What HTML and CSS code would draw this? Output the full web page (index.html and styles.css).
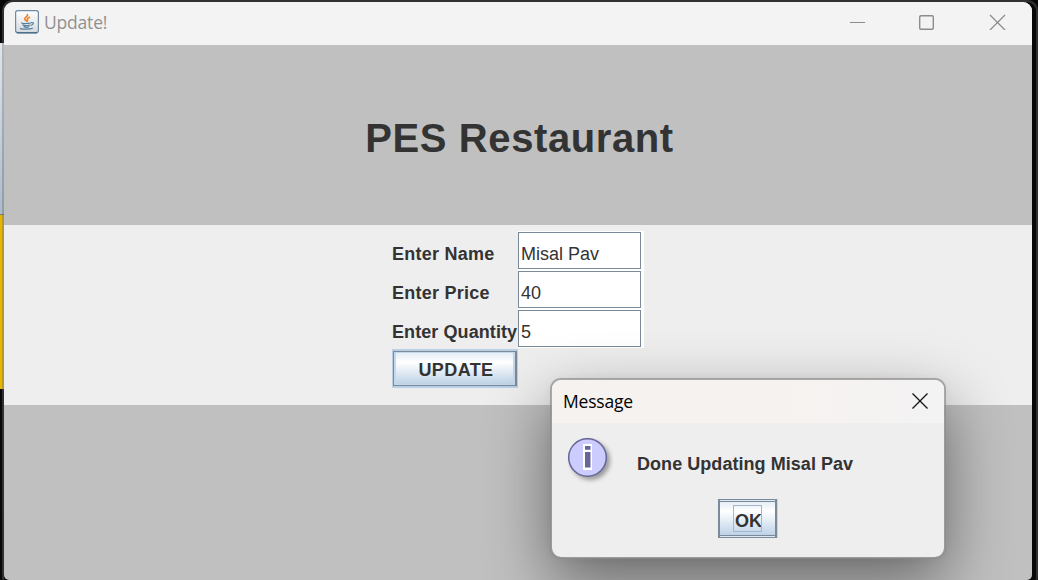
FILE: index.html
```html
<!DOCTYPE html>
<html lang="en">
<head>
<meta charset="utf-8">
<title>Update!</title>
<link rel="stylesheet" href="styles.css">
</head>
<body>
<div class="desktop">
  <div class="behind"><div class="behind-blue"></div><div class="behind-yellow"></div></div>
  <main class="window">
    <header class="titlebar">
      <svg class="java" width="24" height="24" viewBox="0 0 24 24">
        <defs><linearGradient id="tile" x2="0" y2="1"><stop offset="0" stop-color="#fff"/><stop offset="1" stop-color="#d5d9dc"/></linearGradient></defs>
        <rect x=".6" y=".6" width="22.8" height="22" rx="2.2" fill="url(#tile)" stroke="#6d8ba2" stroke-width="1.2"/>
        <path d="M2 22.8h20" stroke="#416985" stroke-width="1.2"/>
        <g fill="none" stroke-linecap="round">
          <path d="M12.500 4.500c1 2-3.800 2.800-2.700 4.800.4.700 1.300 1 1.500 1.700M14.500 7.300c-2 .8-2.800 1.600-2 2.600.4.600.2.900-.2 1.300" stroke="#f0802a" stroke-width="1.600"/>
          <path d="M7 12.900c-1.500.6 5 .9 8.500.1M8 14.900c1.500.8 5 .8 6.900.1M8.900 16.800c1.500.6 3.600.6 5 0M16.500 12.700c2.700-.5 2.300 1.800-.3 2.600M5.500 18.300c-1 1 9.500 1.300 12 0" stroke="#527f9f" stroke-width="1.200"/>
        </g>
      </svg>
      <h1 class="caption">Update!</h1>
      <svg class="controls" width="156" height="16" viewBox="0 0 156 16" fill="none" stroke="#8c8c8c">
        <path d="M0 8.500h15" stroke-width="1.100"/>
        <rect x="69.700" y="1.700" width="13.600" height="13.600" rx="1.200" stroke-width="1.400"/>
        <path d="M140 1l15 15M155 1l-15 15" stroke-width="1.300"/>
      </svg>
    </header>
    <section class="banner"><h2 class="brand">PES Restaurant</h2></section>
    <section class="form">
      <label class="row"><span class="name">Enter Name</span><span class="field">Misal Pav</span></label>
      <label class="row"><span class="name">Enter Price</span><span class="field">40</span></label>
      <label class="row"><span class="name quantity">Enter Quantity</span><span class="field">5</span></label>
      <button class="update">UPDATE</button>
    </section>
    <section class="rest"></section>
  </main>
  <div class="dialog">
    <header class="dialog-title">
      <span>Message</span>
      <svg width="16" height="16" viewBox="0 0 16 16" stroke="#111" stroke-width="1.300"><path d="M.5.5l15 15M15.500.5l-15 15"/></svg>
    </header>
    <div class="message">
      <svg class="info" width="48" height="50" viewBox="0 0 48 50">
        <circle cx="19.500" cy="19.500" r="18.800" fill="#ccccff" stroke="#666699" stroke-width="1.500"/>
        <path d="M15 6h9v26h-9z" fill="#fff"/>
        <path d="M17 8h5.500v3.700H17zM17 14h5.500v15.500H17z" fill="#666699"/>
      </svg>
      <span>Done Updating Misal Pav</span>
    </div>
    <div class="actions"><button class="ok"><span class="focus">OK</span></button></div>
  </div>
</div>
</body>
</html>
```

FILE: styles.css
```css
* { box-sizing: border-box; }
body { margin: 0; font-family: "Liberation Sans", Arial, sans-serif; color: #333; }
.desktop { position: relative; width: 1038px; height: 580px; overflow: hidden; background: #080808; padding: 2px 6px 0 4px; }
.behind { position: absolute; left: 0; top: 43px; width: 4px; }
.behind-blue { height: 172px; background: linear-gradient(#dfe6ec, #aabccd); border-bottom: 1px solid #777; }
.behind-yellow { height: 174px; background: #e5b600; }
.window { position: relative; height: 578px; border-radius: 9px 9px 5px 5px; background: #c0c0c0; overflow: hidden; }
.desktop::before { content: ""; position: absolute; z-index: 1; left: 2px; top: 0; width: 1032px; height: 582px; border: 2px solid rgba(110, 110, 110, .4); border-bottom: 0; border-radius: 11px 11px 7px 7px; pointer-events: none; }
.titlebar { display: flex; align-items: flex-start; height: 43px; padding: 8px 26px 0 11px; background: #f3f3f3; }
.caption { margin: 0 0 0 5px; font: 400 17.500px/25px "Open Sans", "Noto Sans", sans-serif; letter-spacing: -.2px; color: #909090; }
.controls { margin: 4px 0 0 auto; }
.banner { display: flex; justify-content: center; height: 180px; padding-top: 69px; }
.brand { margin: 0 0 0 3px; font-size: 40px; line-height: 48px; letter-spacing: .6px; white-space: nowrap; }
.form { height: 180px; background: #eee; padding: 6px 0 0 388px; }
.row { display: flex; height: 39px; }
.name { width: 126px; padding-top: 13px; font-weight: bold; font-size: 18px; line-height: 21px; letter-spacing: .25px; white-space: nowrap; }
.quantity { letter-spacing: .08px; }
.field { width: 126px; height: 39px; padding: 13px 0 0 3px; background: linear-gradient(#fff, #fff) 1px 2px / 121px 35px no-repeat, linear-gradient(#7a8a99, #7a8a99) 0 1px / 123px 37px no-repeat, #fff; font-size: 18px; line-height: 21px; }
.update { display: block; width: 126px; height: 39px; margin: 1px 0 0; padding: 4px 0 0 2px; border: 1px solid #b8cfe5; border-top-width: 2px; border-bottom-width: 2px; box-shadow: inset 1px 1px #7a8a99, inset -2px -1px #7a8a99, inset 3px 2px #c5d7e8, inset -4px -2px #c5d7e8; background: linear-gradient(#dfe9f3, #fff 32%, #b8cfe5); color: #333; font: bold 18px "Liberation Sans", Arial, sans-serif; letter-spacing: .4px; }
.dialog { position: absolute; left: 550px; top: 378px; z-index: 2; width: 396px; height: 181px; border: 2px solid rgba(140, 140, 140, .7); border-radius: 11px; background: #eee; background-clip: padding-box; box-shadow: 0 24px 64px rgba(0, 0, 0, .46), 0 0 10px rgba(0, 0, 0, .04); }
.dialog-title { display: flex; align-items: center; justify-content: space-between; height: 43px; padding: 0 16px 2px 11px; border-radius: 9px 9px 0 0; background: linear-gradient(90deg, #f6f2f0 60%, #f3f3f3); color: #000; font: 17.500px/24px "Open Sans", "Noto Sans", sans-serif; letter-spacing: -.2px; }
.message { display: flex; height: 76px; padding: 15px 0 0 16px; font-weight: bold; font-size: 18px; line-height: 21px; letter-spacing: .05px; white-space: nowrap; }
.message span { margin: 16px 0 0 21px; }
.info { flex: none; filter: drop-shadow(3px 3px 2px rgba(0, 0, 0, .35)); }
.actions { display: flex; padding-left: 166px; }
.ok { display: flex; width: 59px; height: 39px; padding: 5px 0 0 13px; border: 2px solid #7a8a99; border-width: 1px 2px; background: linear-gradient(#dfe9f3, #fff 30%, #b8cfe5); box-shadow: 1px 0 #c5d7e8, inset 0 1px #dce7f1, inset 0 2px #7a8a99, inset 0 -1px #dce7f1, inset 0 -2px #7a8a99; color: #333; font: bold 18px/30px "Liberation Sans", Arial, sans-serif; }
.focus { width: 29px; height: 27px; padding-left: 1px; border: 1px solid #a3b8cc; overflow: hidden; }
```
